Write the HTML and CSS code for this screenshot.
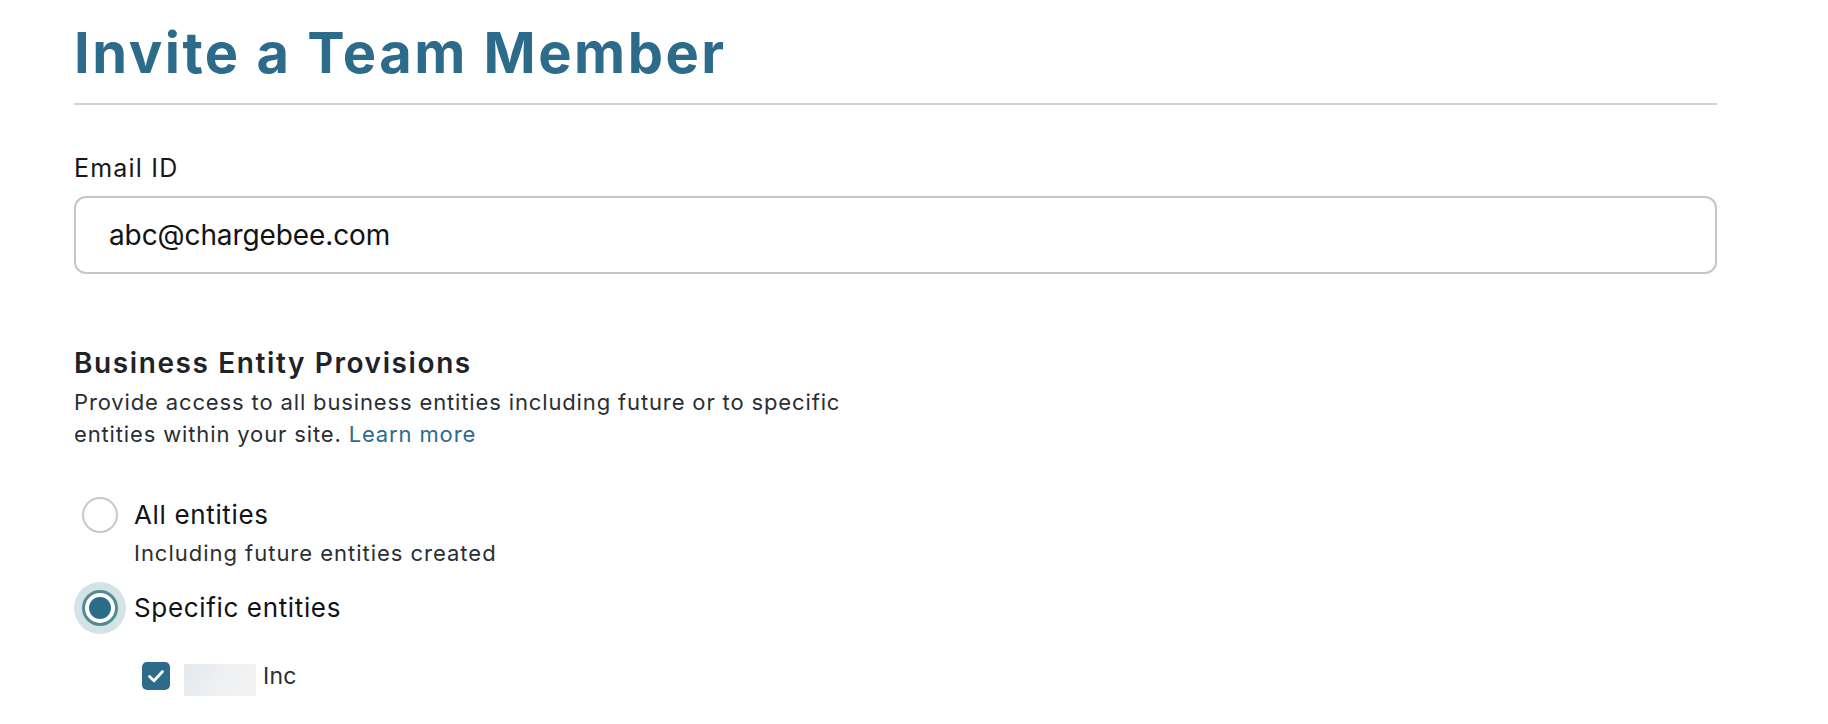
FILE: index.html
```html
<!DOCTYPE html>
<html lang="en">
<head>
<meta charset="utf-8">
<title>Invite a Team Member</title>
<link rel="stylesheet" href="styles.css">
</head>
<body>
<main class="page">
  <h1 class="title">Invite a Team Member</h1>
  <hr class="divider">
  <div class="field">
    <label class="field-label" for="email">Email ID</label>
    <div class="input" id="email">abc@chargebee.com</div>
  </div>
  <section class="section">
    <h2 class="section-title">Business Entity Provisions</h2>
    <p class="section-desc">Provide access to all business entities including future or to specific entities within your site. <a class="link" href="#">Learn more</a></p>
    <div class="options">
      <div class="option">
        <span class="radio"></span>
        <div class="option-body">
          <div class="option-label">All entities</div>
          <div class="option-sub">Including future entities created</div>
        </div>
      </div>
      <div class="option option-checked">
        <span class="radio radio-on"><span class="radio-dot"></span></span>
        <div class="option-body">
          <div class="option-label">Specific entities</div>
        </div>
      </div>
      <div class="entity">
        <span class="checkbox">
          <svg width="22" height="22" viewBox="0 0 22 22"><polyline points="4.5,11.5 9,15.8 17.5,6.5" fill="none" stroke="#fff" stroke-width="2.8" stroke-linecap="round" stroke-linejoin="round"/></svg>
        </span>
        <span class="blur"></span>
        <span class="entity-name">Inc</span>
      </div>
    </div>
  </section>
</main>
</body>
</html>
```

FILE: styles.css
```css
* { box-sizing: border-box; }
html, body { margin: 0; padding: 0; background: #ffffff; }
body { font-family: Inter, "Noto Sans", "Liberation Sans", sans-serif; color: #1b1d21; }

.page {
  width: 1643px;
  margin-left: 74px;
  display: flex;
  flex-direction: column;
}

.title {
  margin: 21px 0 0 0;
  font-size: 56px;
  line-height: 64px;
  font-weight: 700;
  color: #2d6b8b;
  letter-spacing: 2.5px;
}

.divider {
  margin: 18px 0 0 0;
  border: 0;
  height: 2px;
  background: #d3d3d3;
}

.field {
  display: flex;
  flex-direction: column;
  gap: 12px;
  margin-top: 47px;
}

.field-label {
  font-size: 25px;
  line-height: 32px;
  color: #16181c;
  letter-spacing: 1.2px;
}

.input {
  height: 78px;
  border: 2px solid #c2c6cd;
  border-radius: 12px;
  padding: 0 33px;
  display: flex;
  align-items: center;
  font-size: 28px;
  color: #111214;
  letter-spacing: -0.1px;
}

.section {
  margin-top: 71px;
  display: flex;
  flex-direction: column;
}

.section-title {
  margin: 0;
  font-size: 28px;
  line-height: 36px;
  font-weight: 600;
  color: #1f2329;
  letter-spacing: 1.6px;
}

.section-desc {
  margin: 5px 0 0 0;
  max-width: 820px;
  font-size: 22px;
  line-height: 32px;
  color: #2a2e35;
  letter-spacing: 0.86px;
}

.link { color: #2d6b8b; text-decoration: none; }

.options {
  margin-top: 47px;
  display: flex;
  flex-direction: column;
}

.option {
  display: flex;
  align-items: flex-start;
  gap: 16px;
  padding-left: 8px;
}

.option-checked { margin-top: 23px; }

.radio {
  width: 36px;
  height: 36px;
  flex: none;
  border-radius: 50%;
  border: 2px solid #c5c9d0;
  background: #fff;
  display: flex;
  align-items: center;
  justify-content: center;
}

.radio-on {
  border: 3px solid #4f8b90;
  box-shadow: 0 0 0 8px #d4e3e6;
}

.radio-dot {
  width: 22px;
  height: 22px;
  border-radius: 50%;
  background: #2d6b8b;
}

.option-body { display: flex; flex-direction: column; }

.option-label {
  font-size: 26px;
  line-height: 36px;
  color: #121316;
  letter-spacing: 0.65px;
}

.option-sub {
  margin-top: 6px;
  font-size: 22px;
  line-height: 28px;
  color: #2a2e35;
  letter-spacing: 0.98px;
}

.entity {
  margin-top: 29px;
  padding-left: 68px;
  display: flex;
  align-items: center;
}

.checkbox {
  width: 28px;
  height: 28px;
  flex: none;
  border-radius: 5px;
  background: #2d6b8b;
  display: flex;
  align-items: center;
  justify-content: center;
}

.blur {
  width: 72px;
  height: 32px;
  margin-left: 14px;
  margin-top: 9px;
  background: linear-gradient(120deg, #e4e8ec 0%, #eef0f2 50%, #f3f3f3 100%);
}

.entity-name {
  margin-left: 7px;
  font-size: 23px;
  line-height: 32px;
  color: #2a2e35;
  letter-spacing: 0.3px;
}
```
